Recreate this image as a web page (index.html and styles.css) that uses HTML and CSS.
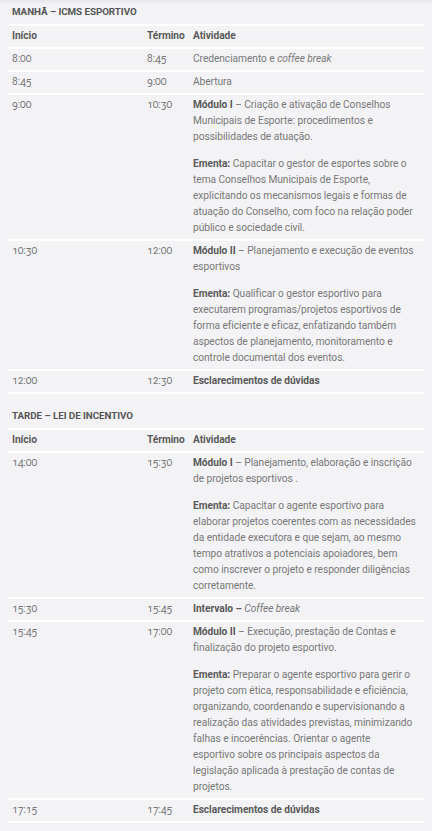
FILE: index.html
```html
<!DOCTYPE html>
<html>
<head>
  <meta charset="utf-8">
  <title>Programação</title>
  <link rel="stylesheet" href="styles.css">
</head>
<body>
  <div class="page">

    <h3 class="period">MANHÃ – ICMS ESPORTIVO</h3>
    <table class="schedule">
      <colgroup>
        <col class="col-start">
        <col class="col-end">
        <col>
      </colgroup>
      <tr class="head">
        <th>Início</th>
        <th>Término</th>
        <th>Atividade</th>
      </tr>
      <tr>
        <td>8:00</td>
        <td>8:45</td>
        <td>Credenciamento e <em>coffee break</em></td>
      </tr>
      <tr>
        <td>8:45</td>
        <td>9:00</td>
        <td>Abertura</td>
      </tr>
      <tr>
        <td>9:00</td>
        <td>10:30</td>
        <td>
          <p><strong>Módulo I</strong> – Criação e ativação de Conselhos Municipais de Esporte: procedimentos e possibilidades de atuação.</p>
          <p><strong>Ementa:</strong> Capacitar o gestor de esportes sobre o tema Conselhos Municipais de Esporte, explicitando os mecanismos legais e formas de atuação do Conselho, com foco na relação poder público e sociedade civil.</p>
        </td>
      </tr>
      <tr>
        <td>10:30</td>
        <td>12:00</td>
        <td>
          <p><strong>Módulo II</strong> – Planejamento e execução de eventos esportivos</p>
          <p><strong>Ementa:</strong> Qualificar o gestor esportivo para executarem programas/projetos esportivos de forma eficiente e eficaz, enfatizando também aspectos de planejamento, monitoramento e controle documental dos eventos.</p>
        </td>
      </tr>
      <tr>
        <td>12:00</td>
        <td>12:30</td>
        <td><strong>Esclarecimentos de dúvidas</strong></td>
      </tr>
    </table>

    <h3 class="period">TARDE – LEI DE INCENTIVO</h3>
    <table class="schedule">
      <colgroup>
        <col class="col-start">
        <col class="col-end">
        <col>
      </colgroup>
      <tr class="head">
        <th>Início</th>
        <th>Término</th>
        <th>Atividade</th>
      </tr>
      <tr>
        <td>14:00</td>
        <td>15:30</td>
        <td>
          <p><strong>Módulo I</strong> – Planejamento, elaboração e inscrição de projetos esportivos .</p>
          <p><strong>Ementa:</strong> Capacitar o agente esportivo para elaborar projetos coerentes com as necessidades da entidade executora e que sejam, ao mesmo tempo atrativos a potenciais apoiadores, bem como inscrever o projeto e responder diligências corretamente.</p>
        </td>
      </tr>
      <tr>
        <td>15:30</td>
        <td>15:45</td>
        <td><strong>Intervalo –</strong> <em>Coffee break</em></td>
      </tr>
      <tr>
        <td>15:45</td>
        <td>17:00</td>
        <td>
          <p><strong>Módulo II</strong> – Execução, prestação de Contas e finalização do projeto esportivo.</p>
          <p><strong>Ementa:</strong> Preparar o agente esportivo para gerir o projeto com ética, responsabilidade e eficiência, organizando, coordenando e supervisionando a realização das atividades previstas, minimizando falhas e incoerências. Orientar o agente<br>esportivo sobre os principais aspectos da legislação aplicada à prestação de contas de projetos.</p>
        </td>
      </tr>
      <tr>
        <td>17:15</td>
        <td>17:45</td>
        <td><strong>Esclarecimentos de dúvidas</strong></td>
      </tr>
    </table>

  </div>
</body>
</html>
```

FILE: styles.css
```css
html, body {
  margin: 0;
  background-color: #f3f3f5;
}

body {
  font-family: Roboto, "Liberation Sans", sans-serif;
  font-size: 10.2px;
  line-height: 16px;
  letter-spacing: -0.05px;
  color: #787878;
  font-variant-numeric: oldstyle-nums;
}

.page {
  min-height: 831px;
  padding: 0 8px;
  box-shadow: inset 0 4px 4px -3px rgba(0, 0, 0, 0.08);
}

.period {
  margin: 10px 0 0;
  padding: 4px 4px;
  font-size: 9.8px;
  font-weight: 700;
  color: #555;
}

.period:first-child {
  margin-top: 0;
}

.schedule {
  width: 416px;
  border-collapse: collapse;
  table-layout: fixed;
  border-top: 2px solid #fff;
}

.col-start {
  width: 135px;
}

.col-end {
  width: 46px;
}

.schedule th,
.schedule td {
  padding: 2px 4px 3px;
  text-align: left;
  vertical-align: top;
  border-bottom: 2px solid #fff;
}

.schedule th {
  font-weight: 700;
  color: #5a5a5a;
}

.schedule p {
  margin: 0 0 11px;
}

.schedule p:last-child {
  margin-bottom: 0;
}

.schedule strong {
  font-weight: 700;
  color: #5a5a5a;
}
```
